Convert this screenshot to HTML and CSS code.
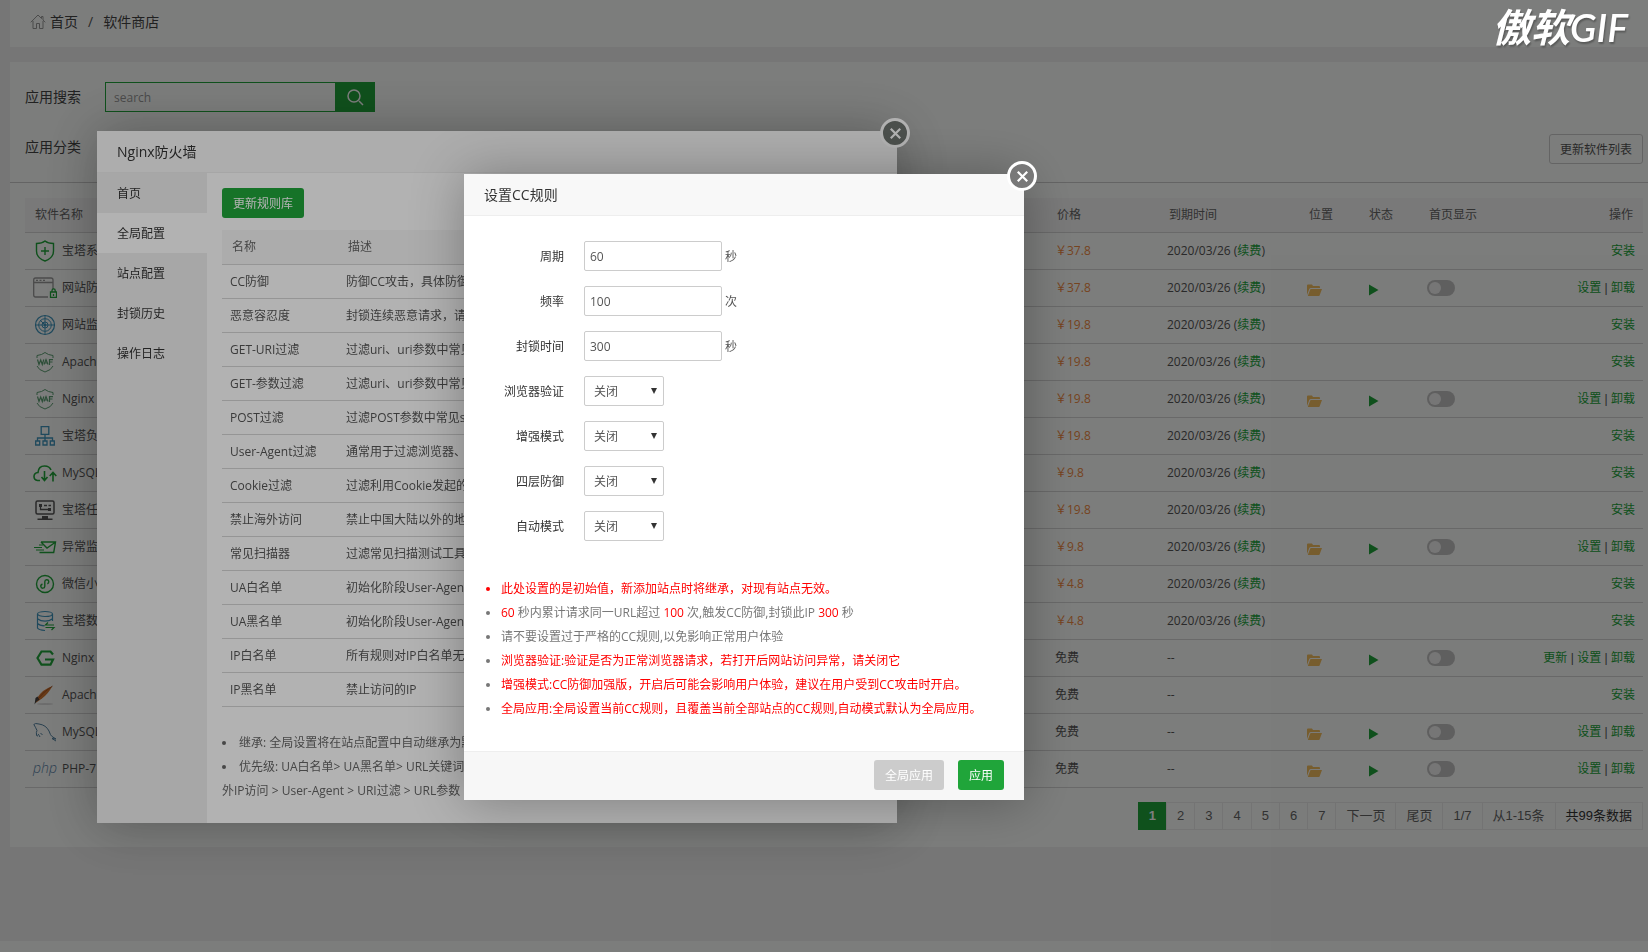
FILE: index.html
```html
<!DOCTYPE html>
<html lang="zh-CN">
<head>
    <meta charset="UTF-8">
    <meta name="viewport" content="width=device-width, initial-scale=1.0">
    <title>软件商店</title>
    <link rel="stylesheet" href="styles.css">
</head>
<body>
    <!-- Shared icons -->
    <svg class="sprite" aria-hidden="true">
        <symbol id="i-folder" viewBox="0 0 15 12">
            <path d="M0 11V1.5Q0 .5 1 .5h4l1 1.5h6q1 0 1 1V4H4Q2.800 4 2.300 5z"/>
            <path d="M.8 12 3.200 5.500Q3.500 5 4 5h11l-2.300 6.300Q12.500 12 11.800 12z"/>
        </symbol>
        <symbol id="i-play" viewBox="0 0 10 12"><path d="M0 .5 9.500 6 0 11.500z"/></symbol>
        <symbol id="i-close" viewBox="0 0 10 10"><path d="M.7.7l8.600 8.600M9.300.7.7 9.300" fill="none" stroke="#fff" stroke-width="2"/></symbol>
        <symbol id="i-waf" viewBox="0 0 24 24">
            <path d="M4 8V5.500Q9 5 12 2.500 15 5 20 5.500V8M4 16q1.500 4 8 6 6.500-2 8-6" fill="none" stroke="#5c9f72"/>
            <path d="M4.500 9.500 6 14.500 7.700 10l1.600 4.500 1.500-5M11 14.500l2-5 2 5M11.700 13h2.600M16.500 15V9.700H20M16.500 12h3" fill="none" stroke="#5c9f72" stroke-width="1.200"/>
        </symbol>
    </svg>

    <!-- Breadcrumb -->
    <nav class="crumb">
        <svg class="home-icon" viewBox="0 0 16 16"><path d="M.8 8.300 8 1l3.500 3.500V2.500H13V6l2.200 2.300M3 7v7.500h3.500V9.500h3v5H13V7" fill="none" stroke="#999"/></svg>
        <a href="#">首页</a>
        <span class="slash">/</span>
        <a href="#">软件商店</a>
    </nav>

    <main class="card">
        <div class="filters">
            <form class="filter-row">
                <label for="search">应用搜索</label>
                <div class="search-box">
                    <input type="text" id="search" placeholder="search">
                    <button type="button" aria-label="搜索">
                        <svg viewBox="0 0 17 17"><path d="M12 12l4 4M13 7A6 6 0 1 1 1 7a6 6 0 0 1 12 0z" fill="none" stroke="#fff" stroke-width="1.500"/></svg>
                    </button>
                </div>
            </form>
            <div class="filter-row filter-type">
                <span>应用分类</span>
                <button type="button" class="btn-default">更新软件列表</button>
            </div>
        </div>

        <!-- Software list -->
        <div class="soft">
            <table class="soft-table">
                <colgroup>
                    <col><col class="c-price"><col class="c-date"><col class="c-icon"><col class="c-icon"><col class="c-show"><col class="c-ops">
                </colgroup>
                <thead>
                    <tr><th>软件名称</th><th>价格</th><th>到期时间</th><th>位置</th><th>状态</th><th>首页显示</th><th class="ops">操作</th></tr>
                </thead>
                <tbody>
                    <tr>
                        <td><div class="name"><svg viewBox="0 0 24 24"><path d="M3.500 4.500Q9 4.500 12 2q3 2.500 8.500 2.500V12q0 7-8.500 10-8.500-3-8.500-10z M12 8v8M8 12h8" fill="none" stroke="#20a53a" stroke-width="1.400"/></svg>宝塔系统</div></td>
                        <td class="price">￥37.8</td><td>2020/03/26 (<a href="#">续费</a>)</td><td></td><td></td><td></td>
                        <td class="ops"><a href="#">安装</a></td>
                    </tr>
                    <tr>
                        <td><div class="name"><svg viewBox="0 0 24 24"><path d="M15 21H2.500Q.7 21 .7 19V4Q.7 2 2.500 2h15.500q2 0 2 2v9M.7 6.500H20M3 4.300h2m1.500 0h2m1.500 0h2" fill="none" stroke="#999" stroke-width="1.300"/><path d="M17.500 16h6v5.300h-6zM19 16v-1.500a1.600 1.600 0 0 1 3.200 0V16M20.500 18v2" fill="none" stroke="#20a53a" stroke-width="1.300"/></svg>网站防篡改</div></td>
                        <td class="price">￥37.8</td><td>2020/03/26 (<a href="#">续费</a>)</td>
                        <td><svg class="folder"><use href="#i-folder"/></svg></td><td><svg class="play"><use href="#i-play"/></svg></td>
                        <td><input type="checkbox" class="switch" aria-label="首页显示"></td>
                        <td class="ops"><a href="#">设置</a> | <a href="#">卸载</a></td>
                    </tr>
                    <tr>
                        <td><div class="name"><svg viewBox="0 0 24 24" fill="none" stroke="#3f95bd"><circle cx="12" cy="12" r="9.500" stroke-width="1.200"/><circle cx="12" cy="12" r="6.300"/><circle cx="12" cy="12" r="3"/><path d="M12 2.500v19M2.500 12h19M7 7l5 5"/><circle cx="12" cy="12" r="1" fill="#3f95bd"/></svg>网站监控</div></td>
                        <td class="price">￥19.8</td><td>2020/03/26 (<a href="#">续费</a>)</td><td></td><td></td><td></td>
                        <td class="ops"><a href="#">安装</a></td>
                    </tr>
                    <tr>
                        <td><div class="name"><svg><use href="#i-waf"/></svg>Apache</div></td>
                        <td class="price">￥19.8</td><td>2020/03/26 (<a href="#">续费</a>)</td><td></td><td></td><td></td>
                        <td class="ops"><a href="#">安装</a></td>
                    </tr>
                    <tr>
                        <td><div class="name"><svg><use href="#i-waf"/></svg>Nginx</div></td>
                        <td class="price">￥19.8</td><td>2020/03/26 (<a href="#">续费</a>)</td>
                        <td><svg class="folder"><use href="#i-folder"/></svg></td><td><svg class="play"><use href="#i-play"/></svg></td>
                        <td><input type="checkbox" class="switch" aria-label="首页显示"></td>
                        <td class="ops"><a href="#">设置</a> | <a href="#">卸载</a></td>
                    </tr>
                    <tr>
                        <td><div class="name"><svg viewBox="0 0 24 24"><path d="M8.200 2.700h7.600v7.600H8.200zM12 10.300v6.500M4.500 17v-3h15v3M2.700 17h4v4h-4zM10 17h4v4h-4zM17.300 17h4v4h-4z" fill="none" stroke="#3f95bd" stroke-width="1.300"/></svg>宝塔负载</div></td>
                        <td class="price">￥19.8</td><td>2020/03/26 (<a href="#">续费</a>)</td><td></td><td></td><td></td>
                        <td class="ops"><a href="#">安装</a></td>
                    </tr>
                    <tr>
                        <td><div class="name"><svg viewBox="0 0 24 24"><path d="M7 19.500H4.500Q1 19 1 15.500T5 11.500Q5.500 5 11.500 5q5 0 6.500 4M11.500 10v9M8.500 16l3 3.500 3-3.500M20 20.500V12M16.700 15 20 11.500 23.300 15" fill="none" stroke="#20a53a" stroke-width="1.600"/></svg>MySQL</div></td>
                        <td class="price">￥9.8</td><td>2020/03/26 (<a href="#">续费</a>)</td><td></td><td></td><td></td>
                        <td class="ops"><a href="#">安装</a></td>
                    </tr>
                    <tr>
                        <td><div class="name"><svg viewBox="0 0 24 24"><rect x="3" y="3" width="18" height="13" rx="1.500" fill="none" stroke="#555" stroke-width="1.500"/><path d="M7.500 7v4.500H16M11 7.500h3m1.500 0h2.500" fill="none" stroke="#555" stroke-width="1.300"/><path d="M6 6h3v3H6zM15 10h3v3h-3zM9 18h6v2.500h4.500v1.500h-15v-1.500H9z" fill="#555"/></svg>宝塔任务</div></td>
                        <td class="price">￥19.8</td><td>2020/03/26 (<a href="#">续费</a>)</td><td></td><td></td><td></td>
                        <td class="ops"><a href="#">安装</a></td>
                    </tr>
                    <tr>
                        <td><div class="name"><svg viewBox="0 0 24 24"><path d="M8 7h14.500l-1.800 10.500H6.500M8 7l6 6 8-5.500" fill="none" stroke="#20a53a" stroke-width="1.400"/><path d="M1 12.500h8M3 15h8M6 10h4" fill="none" stroke="#20a53a"/></svg>异常监控</div></td>
                        <td class="price">￥9.8</td><td>2020/03/26 (<a href="#">续费</a>)</td>
                        <td><svg class="folder"><use href="#i-folder"/></svg></td><td><svg class="play"><use href="#i-play"/></svg></td>
                        <td><input type="checkbox" class="switch" aria-label="首页显示"></td>
                        <td class="ops"><a href="#">设置</a> | <a href="#">卸载</a></td>
                    </tr>
                    <tr>
                        <td><div class="name"><svg viewBox="0 0 24 24" fill="none" stroke="#20a53a" stroke-width="1.400"><circle cx="12" cy="12" r="8.500"/><path d="M9.500 12.200a2 2 0 1 0 2.300 2V9.700a2 2 0 1 1 2.500 2"/></svg>微信小程序</div></td>
                        <td class="price">￥4.8</td><td>2020/03/26 (<a href="#">续费</a>)</td><td></td><td></td><td></td>
                        <td class="ops"><a href="#">安装</a></td>
                    </tr>
                    <tr>
                        <td><div class="name"><svg viewBox="0 0 24 24" fill="none" stroke="#3f95bd" stroke-width="1.200"><ellipse cx="12" cy="5" rx="7.500" ry="2.500"/><path d="M4.500 5v14q1 2 7.500 2.500M19.500 5v7M4.500 9.700q3 2.500 7.500 2.500t7.500-2.500M4.500 14.500q2 2 7 2.300"/><path d="M21 16h-8.500l2.500-2.500M12.500 18.500H21L18.500 21" stroke="#20a53a"/></svg>宝塔数据</div></td>
                        <td class="price">￥4.8</td><td>2020/03/26 (<a href="#">续费</a>)</td><td></td><td></td><td></td>
                        <td class="ops"><a href="#">安装</a></td>
                    </tr>
                    <tr>
                        <td><div class="name"><svg viewBox="0 0 24 24"><path d="M20 8.500 17.500 5.500h-9L4.500 12l4 6.700h9l2.500-5.200h-8" fill="none" stroke="#20a53a" stroke-width="2.200"/></svg>Nginx</div></td>
                        <td>免费</td><td>--</td>
                        <td><svg class="folder"><use href="#i-folder"/></svg></td><td><svg class="play"><use href="#i-play"/></svg></td>
                        <td><input type="checkbox" class="switch" aria-label="首页显示"></td>
                        <td class="ops"><a href="#">更新</a> | <a href="#">设置</a> | <a href="#">卸载</a></td>
                    </tr>
                    <tr>
                        <td><div class="name"><svg viewBox="0 0 24 24"><ellipse cx="12" cy="21" rx="8" ry="1" fill="#ddd"/><path d="M19.500 3Q10 6 4 15L2.500 20 9 15.500Q15 11 19.500 3z" fill="#d2762f"/><path d="M1.500 21.500 2.500 15 4.500 13.500l1 1.500 1 1.500-3 2z" fill="#444"/><path d="M19.500 3Q11 8 4 17" stroke="#8a3c1c" stroke-width=".6" fill="none"/></svg>Apache</div></td>
                        <td>免费</td><td>--</td><td></td><td></td><td></td>
                        <td class="ops"><a href="#">安装</a></td>
                    </tr>
                    <tr>
                        <td><div class="name"><svg viewBox="0 0 24 24"><path d="M5 15.500Q4 17 3.500 15 3 12 4 10.500 2.500 7 .8 4.500 2 2.800 6 4q7 1 10 7 1.500 4.500 3 5.500L23 19l-4-.5 4 2.500M5 14q1 1 2 3M7.500 13l2 2" fill="none" stroke="#5382a1"/></svg>MySQL</div></td>
                        <td>免费</td><td>--</td>
                        <td><svg class="folder"><use href="#i-folder"/></svg></td><td><svg class="play"><use href="#i-play"/></svg></td>
                        <td><input type="checkbox" class="switch" aria-label="首页显示"></td>
                        <td class="ops"><a href="#">设置</a> | <a href="#">卸载</a></td>
                    </tr>
                    <tr>
                        <td><div class="name"><span class="php">php</span>PHP-7</div></td>
                        <td>免费</td><td>--</td>
                        <td><svg class="folder"><use href="#i-folder"/></svg></td><td><svg class="play"><use href="#i-play"/></svg></td>
                        <td><input type="checkbox" class="switch" aria-label="首页显示"></td>
                        <td class="ops"><a href="#">设置</a> | <a href="#">卸载</a></td>
                    </tr>
                </tbody>
            </table>

            <div class="pager">
                <span class="current">1</span><a href="#">2</a><a href="#">3</a><a href="#">4</a><a href="#">5</a><a href="#">6</a><a href="#">7</a><a href="#">下一页</a><a href="#">尾页</a><span>1/7</span><span>从1-15条</span><span class="total">共99条数据</span>
            </div>
        </div>
    </main>
    <footer class="footer"></footer>

    <!-- Firewall window -->
    <div class="shade"></div>
    <section class="layer layer-waf">
        <h2 class="layer-title">Nginx防火墙</h2>
        <button type="button" class="layer-close layer-close-dark" aria-label="关闭"><svg><use href="#i-close"/></svg></button>
        <div class="waf">
            <nav class="waf-menu">
                <a href="#">首页</a>
                <a href="#" class="active">全局配置</a>
                <a href="#">站点配置</a>
                <a href="#">封锁历史</a>
                <a href="#">操作日志</a>
            </nav>
            <div class="waf-con">
                <button type="button" class="btn-success">更新规则库</button>
                <table class="waf-table">
                    <thead>
                        <tr><th class="c-rule">名称</th><th>描述</th></tr>
                    </thead>
                    <tbody>
                        <tr><td>CC防御</td><td>防御CC攻击，具体防御</td></tr>
                        <tr><td>恶意容忍度</td><td>封锁连续恶意请求，请</td></tr>
                        <tr><td>GET-URI过滤</td><td>过滤uri、uri参数中常见</td></tr>
                        <tr><td>GET-参数过滤</td><td>过滤uri、uri参数中常见</td></tr>
                        <tr><td>POST过滤</td><td>过滤POST参数中常见sql</td></tr>
                        <tr><td>User-Agent过滤</td><td>通常用于过滤浏览器、</td></tr>
                        <tr><td>Cookie过滤</td><td>过滤利用Cookie发起的</td></tr>
                        <tr><td>禁止海外访问</td><td>禁止中国大陆以外的地区</td></tr>
                        <tr><td>常见扫描器</td><td>过滤常见扫描测试工具</td></tr>
                        <tr><td>UA白名单</td><td>初始化阶段User-Agent</td></tr>
                        <tr><td>UA黑名单</td><td>初始化阶段User-Agent</td></tr>
                        <tr><td>IP白名单</td><td>所有规则对IP白名单无效</td></tr>
                        <tr><td>IP黑名单</td><td>禁止访问的IP</td></tr>
                    </tbody>
                </table>
                <ul class="waf-help">
                    <li>继承: 全局设置将在站点配置中自动继承为默认</li>
                    <li>优先级: UA白名单&gt; UA黑名单&gt; URL关键词<br>外IP访问 &gt; User-Agent &gt; URI过滤 &gt; URL参数</li>
                </ul>
            </div>
        </div>
    </section>

    <!-- CC rule dialog -->
    <div class="shade"></div>
    <section class="layer layer-cc">
        <h2 class="layer-title">设置CC规则</h2>
        <button type="button" class="layer-close" aria-label="关闭"><svg><use href="#i-close"/></svg></button>
        <form>
            <div class="cc-form">
                <div class="line"><label for="cycle">周期</label><input type="text" id="cycle" value="60"><span class="unit">秒</span></div>
                <div class="line"><label for="limit">频率</label><input type="text" id="limit" value="100"><span class="unit">次</span></div>
                <div class="line"><label for="endtime">封锁时间</label><input type="text" id="endtime" value="300"><span class="unit">秒</span></div>
                <div class="line"><label for="verify">浏览器验证</label><div class="select"><select id="verify"><option>关闭</option><option>开启</option></select></div></div>
                <div class="line"><label for="strong">增强模式</label><div class="select"><select id="strong"><option>关闭</option><option>开启</option></select></div></div>
                <div class="line"><label for="layer4">四层防御</label><div class="select"><select id="layer4"><option>关闭</option><option>开启</option></select></div></div>
                <div class="line"><label for="auto">自动模式</label><div class="select"><select id="auto"><option>关闭</option><option>开启</option></select></div></div>
            </div>
            <ul class="cc-help">
                <li class="red">此处设置的是初始值，新添加站点时将继承，对现有站点无效。</li>
                <li><span class="red">60</span> 秒内累计请求同一URL超过 <span class="red">100</span> 次,触发CC防御,封锁此IP <span class="red">300</span> 秒</li>
                <li>请不要设置过于严格的CC规则,以免影响正常用户体验</li>
                <li><span class="red">浏览器验证:验证是否为正常浏览器请求，若打开后网站访问异常，请关闭它</span></li>
                <li><span class="red">增强模式:CC防御加强版，开启后可能会影响用户体验，建议在用户受到CC攻击时开启。</span></li>
                <li><span class="red">全局应用:全局设置当前CC规则，且覆盖当前全部站点的CC规则,自动模式默认为全局应用。</span></li>
            </ul>
            <div class="cc-btns">
                <button type="button" class="btn-success btn-gray">全局应用</button>
                <button type="button" class="btn-success">应用</button>
            </div>
        </form>
    </section>

    <div class="watermark">傲软GIF</div>
</body>
</html>
```
FILE: styles.css
```css
/* Global Styles */
* {
    box-sizing: border-box;
}

body {
    font-family: "Open Sans", "Noto Sans CJK SC", sans-serif;
    font-size: 12px;
    line-height: 20px;
    margin: 0;
    min-height: 100vh;
    display: flex;
    flex-direction: column;
    overflow: hidden;
    color: #555;
    background: #f1f1f1;
}

a {
    color: #20a53a;
    text-decoration: none;
}

button, input, select {
    font-family: inherit;
    font-size: 12px;
    color: #555;
}

button {
    cursor: pointer;
}

table {
    width: 100%;
    table-layout: fixed;
    border-spacing: 0;
}

th, td {
    padding: 0 8px;
    text-align: left;
    white-space: nowrap;
    border-bottom: 1px solid #d6d6d6;
}

th {
    height: 35px;
    padding: 0 10px;
    font-weight: normal;
    color: #666;
    background: #f6f6f6;
}

.sprite {
    display: none;
}

/* Breadcrumb */
.crumb {
    display: flex;
    align-items: center;
    height: 47px;
    margin-left: 10px;
    padding: 0 20px 4px;
    font-size: 14px;
    background: #fdfffd;
}

.crumb a {
    color: #444;
}

.home-icon {
    width: 16px;
    height: 16px;
    margin-right: 4px;
}

.slash {
    margin: 0 10px;
}

/* Search and filters */
.card {
    margin: 15px 0 0 10px;
    background: #fdfffd;
}

.filters {
    padding: 20px 5px 18px 15px;
    border-bottom: 1px solid #ccc;
}

.filter-row {
    display: flex;
    align-items: center;
    gap: 24px;
    font-size: 14px;
    color: #444;
}

.filter-type {
    justify-content: space-between;
    align-items: flex-start;
    margin-top: 22px;
}

.filter-type span {
    margin-top: 3px;
}

.filter-type .btn-default {
    height: 30px;
}

.search-box {
    display: flex;
    width: 270px;
    height: 30px;
}

.search-box input {
    flex: 1;
    min-width: 0;
    padding: 0 8px;
    border: 1px solid #20a53a;
    background: transparent;
}

.search-box input::placeholder {
    color: #999;
}

.search-box button {
    width: 39px;
    padding: 0;
    border: none;
    background: #20a53a;
}

.search-box svg {
    display: block;
    width: 17px;
    height: 17px;
    margin: 0 auto;
}

.btn-default {
    padding: 0 10px;
    border: 1px solid #ccc;
    border-radius: 3px;
    background: transparent;
}

/* Software list */
.soft {
    padding: 15px 5px 17px 15px;
}

.soft-table td {
    height: 37px;
}

.c-price { width: 112px; }
.c-date { width: 140px; }
.c-icon { width: 60px; }
.c-show { width: 80px; }
.c-ops { width: 144px; }

.soft-table .ops {
    font-family: "Liberation Sans", "Noto Sans CJK SC", sans-serif;
    text-align: right;
}

.soft-table .price {
    color: #f08a42;
}

.name {
    display: flex;
    align-items: center;
    gap: 5px;
}

.name svg, .php {
    width: 24px;
    height: 24px;
}

.php {
    font-size: 14px;
    font-style: italic;
    font-weight: 300;
    line-height: 22px;
    color: #5b83a8;
}

.folder, .play {
    display: block;
    height: 12px;
    margin-top: 3px;
}

.folder {
    width: 15px;
    fill: #f5bf5f;
}

.play {
    width: 10px;
    margin-left: 2px;
    fill: #20a53a;
}

.switch {
    appearance: none;
    display: block;
    width: 28px;
    height: 16px;
    margin: 0;
    padding: 2px;
    border-radius: 8px;
    background: #c4c4c4;
}

.switch::before {
    content: "";
    display: block;
    width: 12px;
    height: 12px;
    border-radius: 50%;
    background: #f3f3f3;
}

/* Pager */
.pager {
    display: flex;
    width: max-content;
    margin: 14px 0 0 auto;
    font-family: "Liberation Sans", "Noto Sans CJK SC", sans-serif;
    font-size: 13px;
    line-height: 26px;
    border: 1px solid #ececec;
    border-left: none;
}

.pager a, .pager span {
    padding: 0 10px;
    color: #666;
    border-left: 1px solid #ececec;
}

.pager .current {
    font-weight: bold;
    color: #fff;
    margin: -1px 0;
    line-height: 28px;
    border-color: #20a53a;
    background: #20a53a;
}

.pager .total {
    color: #333;
}

.footer {
    height: 11px;
    margin-top: auto;
    background: #fdfffd;
}

/* Popup windows */
.shade {
    position: fixed;
    inset: 0;
    background: rgba(0, 0, 0, 0.3);
}

.layer {
    position: fixed;
    background: #fff;
    box-shadow: 1px 1px 50px rgba(0, 0, 0, 0.3);
}

.layer-waf {
    top: 131px;
    left: 97px;
    width: 800px;
}

.layer-cc {
    top: 174px;
    left: 464px;
    width: 560px;
}

.layer-title {
    margin: 0;
    padding: 0 20px;
    font-size: 14px;
    font-weight: normal;
    line-height: 41px;
    color: #333;
    border-bottom: 1px solid #eee;
    background: #f8f8f8;
}

.layer-close {
    position: absolute;
    top: -13px;
    right: -13px;
    width: 30px;
    height: 30px;
    padding: 0;
    border: 3px solid #fff;
    border-radius: 50%;
    background: #787878;
}

.layer-close-dark {
    background: #6e736f;
}

.layer-close svg {
    display: block;
    width: 11px;
    height: 11px;
    margin: 0 auto;
}

.btn-success {
    height: 30px;
    padding: 0 11px;
    color: #fff;
    border: none;
    border-radius: 3px;
    background: #20a53a;
}

.btn-gray {
    background: #ccc;
}

/* Firewall window */
.waf {
    display: flex;
}

.waf-menu {
    width: 110px;
    background: #f0f0f0;
}

.waf-menu a {
    display: block;
    height: 40px;
    padding-left: 20px;
    line-height: 42px;
    color: #333;
}

.waf-menu .active {
    background: #fff;
}

.waf-con {
    flex: 1;
    min-width: 0;
    padding: 15px 15px 20px;
}

.waf-table {
    margin-top: 12px;
}

.waf-table td {
    height: 34px;
}

.c-rule {
    width: 116px;
}

.waf-help {
    margin: 24px 0 0;
    padding: 0;
    line-height: 24px;
    list-style-position: inside;
    color: #666;
    white-space: nowrap;
}

/* CC rule dialog */
.cc-form {
    display: flex;
    flex-direction: column;
    gap: 15px;
    padding-top: 25px;
}

.line {
    display: flex;
    align-items: center;
    color: #555;
}

.line label, .unit {
    padding-top: 2px;
}

.line label {
    width: 120px;
    padding-right: 20px;
    text-align: right;
    color: #333;
}

.line input, .line select {
    height: 30px;
    border: 1px solid #ccc;
    border-radius: 2px;
    background: #fff;
}

.line input {
    width: 138px;
    padding: 0 5px;
}

.unit {
    margin-left: 3px;
}

.select {
    position: relative;
    width: 80px;
}

.select select {
    appearance: none;
    width: 100%;
    padding: 0 9px;
}

.select::after {
    content: "";
    position: absolute;
    top: 12px;
    right: 7px;
    border: 3px solid transparent;
    border-top: 6px solid #333;
    border-bottom: none;
    pointer-events: none;
}

.cc-help {
    margin: 36px 0 30px;
    padding: 0 20px 0 37px;
    line-height: 24px;
    color: #777;
    white-space: nowrap;
}

.red {
    color: #f00;
}

.cc-btns {
    display: flex;
    justify-content: flex-end;
    gap: 14px;
    padding: 8px 20px 10px;
    border-top: 1px solid #eee;
    background: #f7f7f7;
}

.watermark {
    position: fixed;
    top: 6px;
    right: 20px;
    font-family: Lato, "Noto Sans CJK SC", sans-serif;
    font-size: 39px;
    font-style: italic;
    font-weight: 600;
    line-height: 42px;
    color: #fff;
    text-shadow: 1px 2px 2px rgba(0, 0, 0, 0.3);
}
```
